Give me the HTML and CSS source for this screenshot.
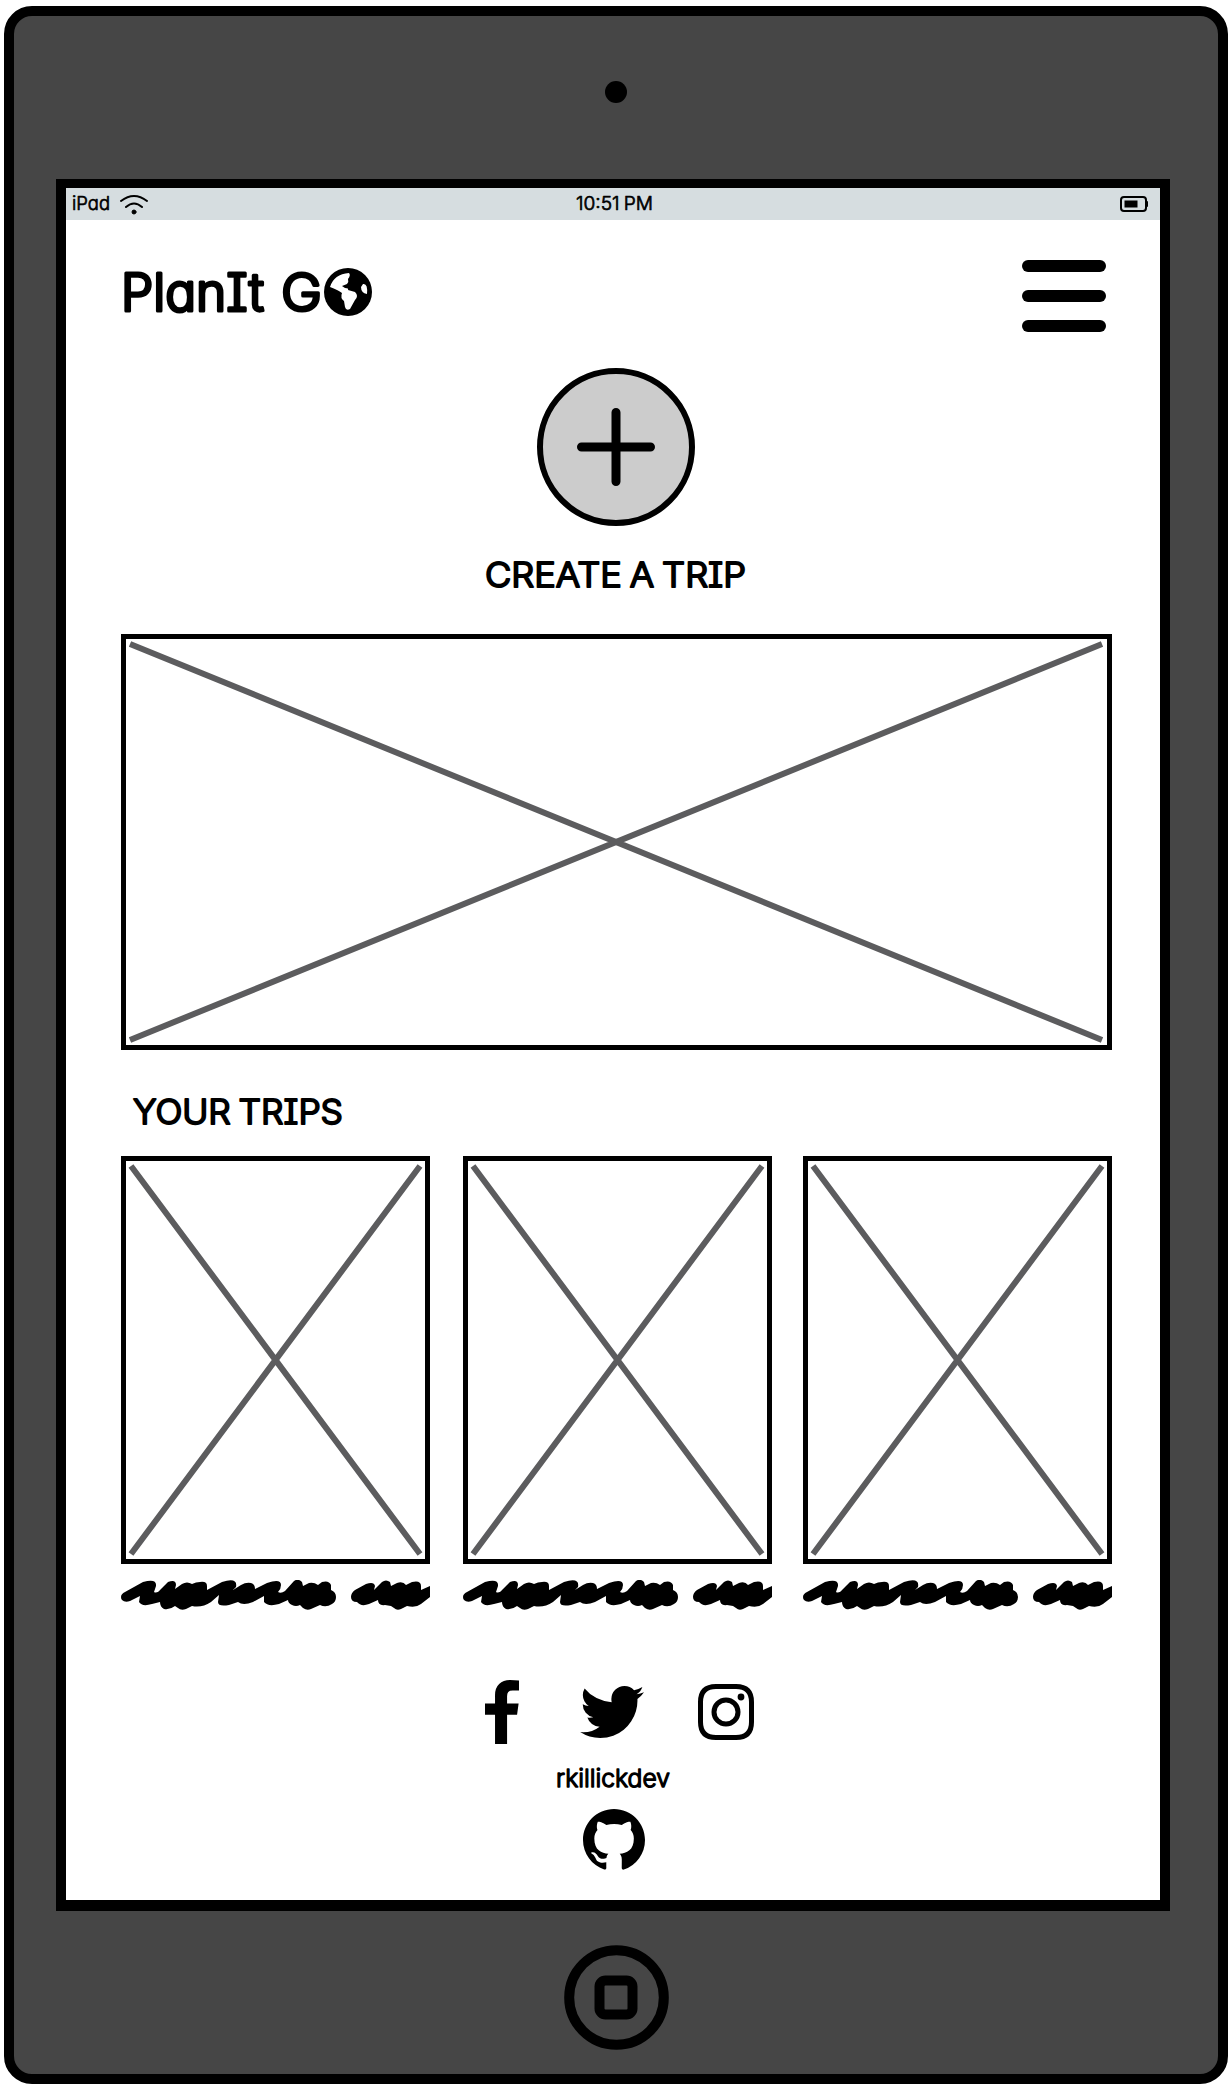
FILE: index.html
```
<!DOCTYPE html>
<html lang="en">
<head>
<meta charset="utf-8">
<title>PlanIt Go</title>
<link rel="stylesheet" href="styles.css">
</head>
<body>
<svg width="0" height="0" class="defs" aria-hidden="true">
  <symbol id="scribble" viewBox="0 0 309 30">
    <path d="M0 17Q0 14 4 12L22 2Q36-2 35 6L33 12Q36 14 40 9L47 2Q55-1 55 5L54 9L61 4Q66 1 71 4Q75 2 79 2Q86 1 86 6V10L101 2Q117-3 115 7L112 10L120 5Q125 2 130 3Q134 4 134 9L146 3Q160-2 160 5Q160 9 157 12Q160 14 164 11L173 1Q177-2 181 2L182 6L188 3Q193 2 197 5L201 2Q208 0 210 5V10Q215 12 215 17Q215 22 211 24Q205 28 199 25L190 29Q186 31 182 28L179 25Q175 27 171 25Q167 23 167 20L158 24Q147 27 143 22V16L132 22Q122 26 117 22L108 25Q97 27 97 22L98 15L90 22Q81 28 71 26L65 29Q60 31 57 28L54 26Q49 30 43 29Q39 27 39 22L31 24Q21 27 18 22L19 16L9 21Q4 23 1 20Q0 19 0 17ZM230 17Q230 13 234 10L245 4Q253 1 254 6L253 10L261 2Q265-1 269 2L270 6L276 3Q282 1 285 5L291 2Q300 0 300 6V10L309 6V17L300 24Q295 28 286 26L280 29Q276 31 273 28L270 26L264 25Q257 26 257 20L248 24Q240 27 236 22Q230 22 230 17Z"/>
  </symbol>
</svg>
<div class="tablet">
  <div class="camera"></div>
  <div class="screen">
    <div class="status">
      <div class="status-left">
        <svg class="txt" width="39" height="22"><text x="0" y="18" font-size="19" stroke-width=".7" textLength="38" lengthAdjust="spacingAndGlyphs">iPad</text></svg>
        <svg class="wifi" width="30" height="22" fill="none" stroke="#000" stroke-width="2" stroke-linecap="round"><path d="M2 8Q15-2 28 8M7 14Q15 7 23 14"/><circle cx="15" cy="19" r="2" fill="#000" stroke-width="1"/></svg>
      </div>
      <svg class="txt time" width="80" height="22"><text x="1" y="18" font-size="19" stroke-width=".7" textLength="77" lengthAdjust="spacingAndGlyphs">10:51 PM</text></svg>
      <svg class="battery" width="28" height="16"><rect x="1" y="1" width="25" height="14" rx="3" fill="none" stroke="#000" stroke-width="2"/><rect x="4.500" y="4.500" width="13" height="7"/><rect x="26" y="5" width="2" height="6" rx="1"/></svg>
    </div>
    <header class="header">
      <div class="brand">
        <svg class="txt" width="199" height="56"><text x="-3" y="48" font-size="52" stroke-width="3.200" textLength="143" lengthAdjust="spacingAndGlyphs">PlanIt</text><text x="157" y="48" font-size="52" stroke-width="3.200" textLength="41" lengthAdjust="spacingAndGlyphs">G</text></svg>
        <svg class="globe" width="48" height="48" viewBox="0 0 48 48"><circle cx="24" cy="24" r="24"/><path fill="#fff" d="M6 19Q10 6 25 5Q27 7 24 11Q25 14 23 16L18 18L21 20Q25 20 24 22L31 24Q35 28 31 32L26 41Q22 43 21 39L20 33Q16 30 18 25Q14 22 6 19ZM39 16Q44 15 43 26Q37 25 37 19Z"/></svg>
      </div>
      <div class="menu"><i></i><i></i><i></i></div>
    </header>
    <section class="create">
      <svg width="158" height="158"><circle cx="79" cy="79" r="76" fill="#ccc" stroke="#000" stroke-width="6"/><path d="M44.500 79H113.500M79 44.500V113.500" stroke="#000" stroke-width="9" stroke-linecap="round"/></svg>
      <svg class="txt create-label" width="262" height="36"><text x="0" y="30.500" font-size="34" stroke-width="2" textLength="261" lengthAdjust="spacingAndGlyphs">CREATE A TRIP</text></svg>
    </section>
    <div class="image hero"><svg viewBox="0 0 981 406"><path d="M4 5L976 401M976 5L4 401"/></svg></div>
    <svg class="txt trips-label" width="214" height="36"><text x="0" y="30.500" font-size="34" stroke-width="2" textLength="210" lengthAdjust="spacingAndGlyphs">YOUR TRIPS</text></svg>
    <div class="trips">
      <div class="trip"><div class="image"><svg viewBox="0 0 299 398"><path d="M5 5L294 393M294 5L5 393"/></svg></div><svg class="name"><use href="#scribble"/></svg></div>
      <div class="trip"><div class="image"><svg viewBox="0 0 299 398"><path d="M5 5L294 393M294 5L5 393"/></svg></div><svg class="name"><use href="#scribble"/></svg></div>
      <div class="trip"><div class="image"><svg viewBox="0 0 299 398"><path d="M5 5L294 393M294 5L5 393"/></svg></div><svg class="name"><use href="#scribble"/></svg></div>
    </div>
    <footer class="footer">
      <div class="social">
        <svg width="34" height="64" viewBox="479 0 864 1664" preserveAspectRatio="none"><path d="M1343 12v264h-157q-86 0-116 36t-30 108v189h293l-39 296h-254v759h-306v-759h-255v-296h255v-218q0-186 104-288.500t277-102.500q147 0 228 12z"/></svg>
        <svg class="bird" width="64" height="52" viewBox="108 256 1576 1280" preserveAspectRatio="none"><path d="M1684 408q-67 98-162 167 1 14 1 42 0 130-38 259.500t-115.500 248.500-184.500 210.500-258 146-323 54.500q-271 0-492-145 35 4 78 4 225 0 401-138-105-2-188-64.500t-114-159.500q33 5 61 5 43 0 85-11-112-23-185.500-111.500t-73.500-205.500v-4q68 38 146 41-66-44-105-115t-39-154q0-88 44-163 121 149 294.500 238.500t371.500 99.500q-8-38-8-74 0-134 94.500-228.500t228.500-94.500q140 0 236 102 109-21 205-78-37 115-142 178 93-10 186-50z"/></svg>
        <svg width="56" height="56" fill="none" stroke="#000" stroke-width="5"><path d="M18 2.500H38Q53.500 2.500 53.500 18V38Q53.500 53.500 38 53.500H18Q2.500 53.500 2.500 38V18Q2.500 2.500 18 2.500Z"/><circle cx="28" cy="28" r="12"/><circle cx="43" cy="13" r="3.400" fill="#000" stroke="none"/></svg>
      </div>
      <svg class="txt handle" width="116" height="26"><text x="1" y="22" font-size="24" stroke-width="1.300" textLength="114" lengthAdjust="spacingAndGlyphs">rkillickdev</text></svg>
      <svg class="github" width="62" height="61" viewBox="0 0 16 15.700" preserveAspectRatio="none"><path d="M8 0C3.580 0 0 3.580 0 8c0 3.540 2.290 6.530 5.470 7.590.4.070.55-.17.55-.38 0-.19-.01-.82-.01-1.490-2.010.37-2.530-.49-2.690-.94-.09-.23-.48-.94-.82-1.130-.28-.15-.68-.52-.01-.53.63-.01 1.080.58 1.230.82.72 1.210 1.870.87 2.330.66.070-.52.28-.87.51-1.070-1.780-.2-3.640-.89-3.640-3.950 0-.87.31-1.590.82-2.150-.08-.2-.36-1.020.08-2.120 0 0 .67-.21 2.200.82.64-.18 1.320-.27 2-.27s1.360.09 2 .27c1.530-1.040 2.200-.82 2.200-.82.44 1.100.16 1.920.08 2.120.51.56.82 1.270.82 2.150 0 3.070-1.870 3.750-3.650 3.950.29.25.54.73.54 1.480 0 1.070-.01 1.930-.01 2.200 0 .21.15.46.55.38A8.010 8.010 0 0 0 16 8c0-4.420-3.580-8-8-8z"/></svg>
    </footer>
  </div>
  <svg class="home" width="105" height="105"><g fill="none" stroke="#000" stroke-width="10"><circle cx="52.500" cy="52.500" r="47.300"/><rect x="35.500" y="35.500" width="33" height="34" rx="6"/></g></svg>
</div>
</body>
</html>
```
FILE: styles.css
```
* { box-sizing: border-box; }
body { margin: 0; background: #fff; }
svg { display: block; flex: none; }
.defs { display: none; }
.tablet {
  width: 1224px; height: 2078px; margin: 6px 4px 4px;
  border: 10px solid #000; border-radius: 28px; background: #464646;
  display: flex; flex-direction: column; align-items: center;
  padding-top: 65px;
}
.camera { width: 22px; height: 22px; border-radius: 50%; background: #000; flex: none; }
.screen {
  width: 1114px; height: 1732px; margin: 76px 6px 0 0; flex: none;
  border: solid #000; border-width: 9px 10px 11px; background: #fff;
  display: flex; flex-direction: column;
}
.txt { overflow: visible; }
.txt text {
  font-family: Inter, "Open Sans", sans-serif; font-weight: 300;
  font-feature-settings: "cv08", "cv11"; white-space: pre;
  word-spacing: -.06em;
  fill: #000; stroke: #000; stroke-linejoin: round;
}
.status {
  height: 32px; background: #d6dde0; flex: none;
  display: grid; grid-template-columns: 1fr 80px 1fr; padding: 3px 12px 0 6px;
}
.status-left { display: flex; gap: 8px; }
.status-left .txt, .time { margin-top: 1px; }
.time { margin-left: 5px; }
.wifi { margin-top: 2px; }
.battery { justify-self: end; margin-top: 5px; }
.header { display: flex; justify-content: space-between; padding: 40px 54px 0 58px; height: 148px; flex: none; }
.brand { display: flex; padding-top: 3px; }
.globe { margin: 5px 0 0 1px; }
.menu { display: flex; flex-direction: column; gap: 18px; }
.menu i { width: 84px; height: 12px; border-radius: 6px; background: #000; }
.create { display: flex; flex-direction: column; align-items: center; padding-left: 6px; height: 266px; flex: none; }
.create-label { margin-top: 30px; }
.image { border: 5px solid #000; }
.image svg { width: 100%; height: 100%; fill: none; stroke: #5c5c5e; stroke-width: 6; }
.hero { width: 991px; height: 416px; margin-left: 55px; flex: none; }
.trips-label { margin: 43px 0 0 67px; }
.trips { display: flex; justify-content: space-between; margin: 27px 48px 0 55px; }
.trip { width: 309px; }
.trip:nth-child(2) { margin: 0 -1px 0 1px; }
.trip .image { height: 408px; }
.name { width: 309px; height: 30px; margin-top: 16px; }
.footer { display: flex; flex-direction: column; align-items: center; margin-top: 70px; }
.social { display: flex; align-items: center; gap: 58px; margin-left: 13px; }
.bird { margin-left: 3px; margin-right: -4px; }
.handle { margin-top: 21px; }
.github { margin: 18px 0 0 2px; }
.home { margin-top: 34px; }
```
